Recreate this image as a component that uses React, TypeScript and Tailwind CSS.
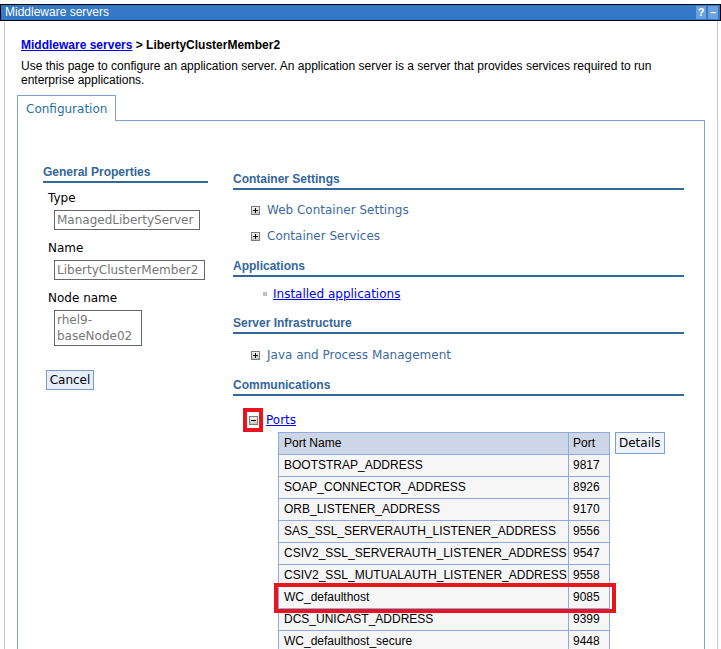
const arial = "font-['Liberation_Sans',Arial,sans-serif]";
const dejavu = "font-['DejaVu_Sans',Verdana,sans-serif]";

const ports = [
  { name: "BOOTSTRAP_ADDRESS", port: "9817" },
  { name: "SOAP_CONNECTOR_ADDRESS", port: "8926" },
  { name: "ORB_LISTENER_ADDRESS", port: "9170" },
  { name: "SAS_SSL_SERVERAUTH_LISTENER_ADDRESS", port: "9556" },
  { name: "CSIV2_SSL_SERVERAUTH_LISTENER_ADDRESS", port: "9547" },
  { name: "CSIV2_SSL_MUTUALAUTH_LISTENER_ADDRESS", port: "9558" },
  { name: "WC_defaulthost", port: "9085" },
  { name: "DCS_UNICAST_ADDRESS", port: "9399" },
  { name: "WC_defaulthost_secure", port: "9448" },
  { name: "WC_adminhost", port: "9060" },
];

function ToggleIcon({ open }: { open?: boolean }) {
  return (
    <svg width="9" height="9" viewBox="0 0 9 9" className="shrink-0">
      <defs>
        <linearGradient id={open ? "tgm" : "tgp"} x1="0" y1="0" x2="0" y2="1">
          <stop offset="0" stopColor="#f4f4f4" />
          <stop offset="1" stopColor="#c4c4c4" />
        </linearGradient>
      </defs>
      <rect x="0.5" y="0.5" width="8" height="8" fill={`url(#${open ? "tgm" : "tgp"})`} stroke="#7a7a7a" />
      <path d="M2 4.5h5" stroke="#000" strokeWidth="1" />
      {!open && <path d="M4.5 2v5" stroke="#000" strokeWidth="1" />}
    </svg>
  );
}

function SectionHeading({ children }: { children: React.ReactNode }) {
  return (
    <div className={`${arial} text-[12px] leading-[14px] font-bold text-[#336699] pb-[2px] border-b-2 border-[#336699]`}>
      {children}
    </div>
  );
}

function ExpandItem({ label, className = "" }: { label: string; className?: string }) {
  return (
    <div className={`flex items-center h-4 pl-[18px] gap-[7px] ${className}`}>
      <ToggleIcon />
      <span className={`${dejavu} text-[12px] leading-4 text-[#3d6a9e]`}>{label}</span>
    </div>
  );
}

function Field({ label, value, width, className = "" }: { label: string; value: React.ReactNode; width: string; className?: string }) {
  return (
    <div className={className}>
      <div className={`${dejavu} text-[12px] leading-[14px] text-black pl-[5px]`}>{label}</div>
      <div
        className={`${dejavu} ml-[11px] mt-[5px] border border-[#666] text-[12px] leading-4 text-[#777] pl-[2px] pt-px pb-px ${width}`}
      >
        {value}
      </div>
    </div>
  );
}

export default function App() {
  return (
    <div className="bg-white min-h-screen pt-1">
      {/* Title bar */}
      <div className={`${arial} flex items-center h-[17px] bg-[#3478c6] border border-black text-white text-[12px] pl-1`}>
        <span className="flex-1 leading-[15px]">Middleware servers</span>
        <span className="flex items-center justify-center w-[10px] h-[13px] bg-[#6aa2de] text-[11px] font-bold leading-none mr-[2px]">?</span>
        <span className="flex items-center justify-center w-[10px] h-[13px] bg-[#6aa2de] text-[11px] font-bold leading-none mr-[2px]">–</span>
      </div>

      <div className="ml-1 w-[714px] border-l border-r border-[#c9c9c9] px-3 pt-[17px] min-h-[640px]">
        <div className={`${arial} text-[12px] leading-[14px] pl-1 font-bold text-black`}>
          <a href="#" className="text-[#0000ee] underline">Middleware servers</a> &gt; LibertyClusterMember2
        </div>
        <p className={`${arial} text-[12px] leading-[14px] pl-1 mt-[7px] w-[670px] text-black`}>
          Use this page to configure an application server. An application server is a server that provides services required to run enterprise applications.
        </p>

        {/* Tabs */}
        <div className="flex mt-2">
          <div className={`${dejavu} w-[99px] h-[26px] border-l border-t border-r border-[#7f9ed6] text-[12px] text-[#2a6ea6] pl-2 pt-[5px] leading-[16px]`}>
            Configuration
          </div>
          <div className="flex-1 h-[26px] border-b border-[#7f9ed6]" />
        </div>

        <div className="border-l border-r border-[#7f9ed6] pt-[44px] pl-[25px] pb-8 flex gap-[25px]">
          {/* General properties */}
          <div className="w-[165px] shrink-0">
            <SectionHeading>General Properties</SectionHeading>
            <Field className="mt-2" label="Type" value="ManagedLibertyServer" width="w-[146px]" />
            <Field className="mt-[11px]" label="Name" value="LibertyClusterMember2" width="w-[151px]" />
            <Field
              className="mt-[11px]"
              label="Node name"
              value={
                <>
                  rhel9-
                  <br />
                  baseNode02
                </>
              }
              width="w-[88px]"
            />
            <button
              className={`${dejavu} mt-6 ml-[3px] h-5 w-[48px] border border-[#7b98c6] bg-[#e6eefb] text-[12px] leading-4 text-black`}
            >
              Cancel
            </button>
          </div>

          {/* Additional properties */}
          <div className="w-[451px] shrink-0 mt-[7px]">
            <SectionHeading>Container Settings</SectionHeading>
            <ExpandItem className="mt-[12px]" label="Web Container Settings" />
            <ExpandItem className="mt-[10px]" label="Container Services" />

            <div className="mt-[15px]">
              <SectionHeading>Applications</SectionHeading>
            </div>
            <div className="mt-[9px] flex items-center h-4 pl-[30px] gap-[6px]">
              <span className="w-1 h-1 bg-[#c0c0c0]" />
              <a href="#" className={`${dejavu} text-[12px] leading-4 text-[#0000ee] underline`}>
                Installed applications
              </a>
            </div>

            <div className="mt-[14px]">
              <SectionHeading>Server Infrastructure</SectionHeading>
            </div>
            <ExpandItem className="mt-[13px]" label="Java and Process Management" />

            <div className="mt-[15px]">
              <SectionHeading>Communications</SectionHeading>
            </div>

            <div className="mt-[12px] flex items-center pl-[10px] gap-[3px]">
              <div className="w-5 h-6 border-4 border-[#e8141e] flex items-center justify-center">
                <ToggleIcon open />
              </div>
              <a href="#" className={`${dejavu} text-[12px] leading-4 text-[#0000ee] underline`}>
                Ports
              </a>
            </div>

            <div className="flex items-start gap-[5px] pl-[45px]">
              <div className={`${arial} relative text-[12px] text-black border-l border-t border-[#8eaae0]`}>
                <div className="flex bg-[#cdd6e6]">
                  <div className="w-[290px] h-[22px] border-r border-b border-[#8eaae0] pl-[5px] leading-[21px]">Port Name</div>
                  <div className="w-[41px] h-[22px] border-r border-b border-[#8eaae0] pl-1 leading-[21px]">Port</div>
                </div>
                {ports.map((p) => (
                  <div key={p.name} className="flex bg-[#f6f6f6]">
                    <div className="w-[290px] h-[22px] border-r border-b border-[#8eaae0] pl-[5px] leading-[21px]">{p.name}</div>
                    <div className="w-[41px] h-[22px] border-r border-b border-[#8eaae0] pl-1 leading-[21px]">{p.port}</div>
                  </div>
                ))}
                {/* highlight */}
                <div className="absolute left-[-5px] top-[150px] w-[342px] h-[30px] border-4 border-[#e8141e] pointer-events-none" />
              </div>
              <button
                className={`${dejavu} h-[22px] px-[3px] border border-[#7f9fd4] bg-[#eef3fb] text-[12px] leading-4 text-black`}
              >
                Details
              </button>
            </div>
          </div>
        </div>
      </div>
    </div>
  );
}
